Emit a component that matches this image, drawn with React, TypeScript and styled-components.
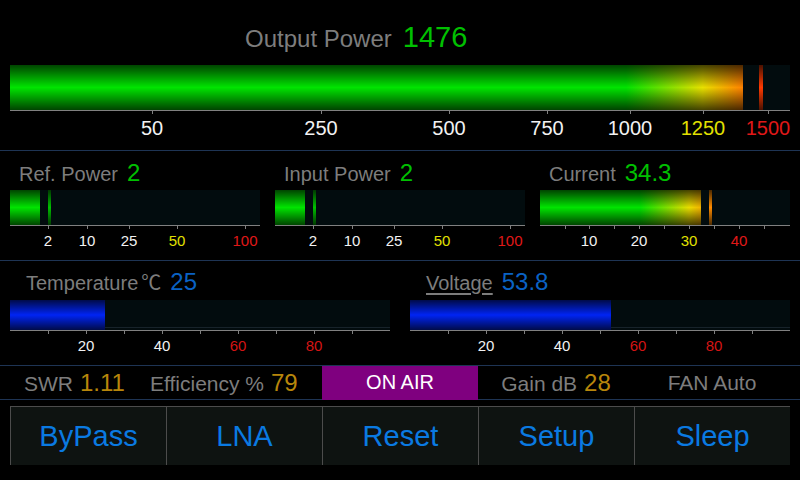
import React from 'react';
import styled, { createGlobalStyle } from 'styled-components';

const GlobalStyle = createGlobalStyle`
  html, body {
    margin: 0;
    padding: 0;
    background: #000;
  }
  body {
    font-family: "Liberation Sans", Arial, "DejaVu Sans", sans-serif;
  }
`;

const SHADE =
  'linear-gradient(to bottom, rgba(0,0,0,0.7) 0%, rgba(0,0,0,0) 50%, rgba(0,0,0,0.7) 100%)';

const GREY = '#7d7d7d';
const GREEN = '#00c000';
const BLUE = '#0a62c4';
const GOLD = '#b8860b';
const WHITE = '#f2f2f2';
const YELLOW = '#e2e000';
const RED = '#e01818';

type Tick = { at: number; label?: string; color?: string };

const Screen = styled.div`
  width: 800px;
  height: 480px;
  background: #000;
  overflow: hidden;
  display: flex;
  flex-direction: column;
`;

const Section = styled.section<{ $top: number }>`
  box-sizing: border-box;
  padding: ${(p) => p.$top}px 10px 0;
  border-bottom: 1px solid #1e3454;
`;

const TitleRow = styled.div`
  display: flex;
  align-items: baseline;
  gap: 11px;
  height: 30px;
  padding-left: 235px;
`;

const TitleLabel = styled.span`
  font-size: 24px;
  line-height: 30px;
  color: ${GREY};
`;

const TitleValue = styled.span`
  font-size: 29px;
  line-height: 30px;
  color: ${GREEN};
`;

const Row = styled.div<{ $gap: number }>`
  display: flex;
  gap: ${(p) => p.$gap}px;
`;

const Block = styled.div<{ $w: number }>`
  flex: 0 0 ${(p) => p.$w}px;
  display: flex;
  flex-direction: column;
`;

const LabelRow = styled.div<{ $indent: number; $after: number }>`
  display: flex;
  align-items: baseline;
  gap: 9px;
  height: 26px;
  padding-left: ${(p) => p.$indent}px;
  margin-bottom: ${(p) => p.$after}px;
`;

const Label = styled.span<{ $underline?: boolean }>`
  font-size: 20px;
  line-height: 26px;
  color: ${GREY};
  text-decoration: ${(p) => (p.$underline ? 'underline' : 'none')};
  text-underline-offset: 3px;
`;

const Unit = styled.span`
  font-family: "Noto Sans CJK SC", "DejaVu Sans", sans-serif;
  margin-left: 3px;
`;

const Value = styled.span<{ $color: string }>`
  font-size: 24px;
  line-height: 26px;
  color: ${(p) => p.$color};
`;

const Track = styled.div<{ $h: number; $lined?: boolean }>`
  position: relative;
  height: ${(p) => p.$h}px;
  display: flex;
  background: ${(p) =>
    p.$lined
      ? 'linear-gradient(to top, #020c0e 2px, #17232a 2px, #17232a 3px, #020c0e 3px)'
      : '#020c0e'};
`;

const Fill = styled.div<{ $grad: string }>`
  height: 100%;
  background-image: ${SHADE}, ${(p) => p.$grad};
  background-repeat: no-repeat;
`;

const Peak = styled.div<{ $color: string; $w: number }>`
  position: absolute;
  top: 0;
  bottom: 0;
  width: ${(p) => p.$w}px;
  background-image: ${SHADE}, linear-gradient(${(p) => p.$color}, ${(p) => p.$color});
`;

const Scale = styled.div<{ $h: number }>`
  position: relative;
  height: ${(p) => p.$h}px;
  border-top: 1px solid #808080;
`;

const TickMark = styled.div`
  position: absolute;
  top: 0;
  width: 1px;
  height: 3px;
  background: #808080;
`;

const TickLabel = styled.span<{ $color: string; $size: number; $top: number }>`
  position: absolute;
  top: ${(p) => p.$top}px;
  transform: translateX(-50%);
  font-size: ${(p) => p.$size}px;
  line-height: ${(p) => p.$size}px;
  color: ${(p) => p.$color};
  white-space: nowrap;
`;

const StatusBar = styled.div`
  display: grid;
  grid-template-columns: 140px 172px 156px 156px 156px;
  height: 33px;
`;

const StatusCell = styled.div<{ $align: 'start' | 'center'; $indent?: number }>`
  display: flex;
  align-items: baseline;
  justify-content: ${(p) => (p.$align === 'center' ? 'center' : 'flex-start')};
  padding-left: ${(p) => p.$indent ?? 0}px;
  gap: 7px;
  line-height: 33px;
`;

const StatusLabel = styled.span`
  font-size: 21px;
  color: ${GREY};
`;

const StatusValue = styled.span`
  font-size: 24px;
  color: ${GOLD};
`;

const OnAir = styled.div`
  background: #7f007f;
  color: #fff;
  font-size: 20px;
  line-height: 33px;
  text-align: center;
`;

const ButtonBar = styled.div`
  display: grid;
  grid-template-columns: repeat(5, 156px);
  padding: 6px 10px 0;
`;

const Button = styled.button`
  height: 59px;
  margin: 0;
  padding: 0;
  background: #0e1311;
  border: none;
  border-top: 1px solid #4c4c4c;
  border-left: 1px solid #4c4c4c;
  color: #0a7ae2;
  font-family: inherit;
  font-size: 29px;
  cursor: pointer;
`;

type MeterProps = {
  height: number;
  fill: number;
  grad: string;
  peak?: number;
  peakColor?: string;
  peakWidth?: number;
  ticks: Tick[];
  scaleHeight: number;
  labelSize: number;
  labelTop: number;
  lined?: boolean;
};

function Meter({
  height,
  fill,
  grad,
  peak,
  peakColor = GREEN,
  peakWidth = 3,
  ticks,
  scaleHeight,
  labelSize,
  labelTop,
  lined,
}: MeterProps) {
  return (
    <div>
      <Track $h={height} $lined={lined}>
        <Fill
          $grad={grad}
          style={{ width: `${fill * 100}%`, backgroundSize: `${100 / fill}% 100%` }}
        />
        {peak !== undefined && (
          <Peak $color={peakColor} $w={peakWidth} style={{ left: `${peak * 100}%` }} />
        )}
      </Track>
      <Scale $h={scaleHeight}>
        {ticks.map((t, i) => (
          <React.Fragment key={i}>
            <TickMark style={{ left: `${t.at * 100}%` }} />
            {t.label && (
              <TickLabel
                $color={t.color ?? WHITE}
                $size={labelSize}
                $top={labelTop}
                style={{ left: `${t.at * 100}%` }}
              >
                {t.label}
              </TickLabel>
            )}
          </React.Fragment>
        ))}
      </Scale>
    </div>
  );
}

const powerTicks: Tick[] = [
  { at: 142 / 780, label: '50' },
  { at: 311 / 780, label: '250' },
  { at: 439 / 780, label: '500' },
  { at: 537 / 780, label: '750' },
  { at: 620 / 780, label: '1000' },
  { at: 693 / 780, label: '1250', color: YELLOW },
  { at: 758 / 780, label: '1500', color: RED },
];

const smallTicks: Tick[] = [
  { at: 38 / 250, label: '2' },
  { at: 77 / 250, label: '10' },
  { at: 119 / 250, label: '25' },
  { at: 167 / 250, label: '50', color: YELLOW },
  { at: 235 / 250, label: '100', color: RED },
];

const currentTicks: Tick[] = [
  { at: 25 / 250 },
  { at: 49 / 250, label: '10' },
  { at: 74 / 250 },
  { at: 99 / 250, label: '20' },
  { at: 124 / 250 },
  { at: 149 / 250, label: '30', color: YELLOW },
  { at: 174 / 250 },
  { at: 199 / 250, label: '40', color: RED },
  { at: 224 / 250 },
];

const linearTicks: Tick[] = [
  { at: 0.1 },
  { at: 0.2, label: '20' },
  { at: 0.3 },
  { at: 0.4, label: '40' },
  { at: 0.5 },
  { at: 0.6, label: '60', color: '#d41414' },
  { at: 0.7 },
  { at: 0.8, label: '80', color: '#d41414' },
  { at: 0.9 },
];

const mainGrad =
  'linear-gradient(to right, #00e400 0%, #00e400 79%, #e8e000 88.8%, #ff8000 94%, #ff2800 97%)';
const smallGrad =
  'linear-gradient(to right, #00e400 0%, #00e400 47.6%, #e8e000 66.8%, #ff2800 94%)';
const currentGrad =
  'linear-gradient(to right, #00e400 0%, #00e400 40%, #e8dc00 59.6%, #ff8000 70%, #ff2800 80%)';
const blueGrad = 'linear-gradient(to right, #0024f4, #0024f4)';

const buttons = ['ByPass', 'LNA', 'Reset', 'Setup', 'Sleep'];

export default function App() {
  return (
    <>
      <GlobalStyle />
      <Screen>
        <Section $top={22}>
          <TitleRow>
            <TitleLabel>Output Power</TitleLabel>
            <TitleValue>1476</TitleValue>
          </TitleRow>
          <div style={{ height: 13 }} />
          <Meter
            height={45}
            fill={733 / 780}
            grad={mainGrad}
            peak={749 / 780}
            peakColor="#ff3a00"
            peakWidth={4}
            ticks={powerTicks}
            scaleHeight={39}
            labelSize={20}
            labelTop={7}
          />
        </Section>

        <Section $top={9}>
          <Row $gap={15}>
            <Block $w={250}>
              <LabelRow $indent={9} $after={4}>
                <Label>Ref. Power</Label>
                <Value $color={GREEN}>2</Value>
              </LabelRow>
              <Meter
                height={35}
                fill={30 / 250}
                grad={smallGrad}
                peak={38 / 250}
                ticks={smallTicks}
                scaleHeight={34}
                labelSize={15}
                labelTop={7}
              />
            </Block>
            <Block $w={250}>
              <LabelRow $indent={9} $after={4}>
                <Label>Input Power</Label>
                <Value $color={GREEN}>2</Value>
              </LabelRow>
              <Meter
                height={35}
                fill={30 / 250}
                grad={smallGrad}
                peak={38 / 250}
                ticks={smallTicks}
                scaleHeight={34}
                labelSize={15}
                labelTop={7}
              />
            </Block>
            <Block $w={250}>
              <LabelRow $indent={9} $after={4}>
                <Label>Current</Label>
                <Value $color={GREEN}>34.3</Value>
              </LabelRow>
              <Meter
                height={35}
                fill={161 / 250}
                grad={currentGrad}
                peak={169 / 250}
                peakColor="#ff8c00"
                ticks={currentTicks}
                scaleHeight={34}
                labelSize={15}
                labelTop={7}
              />
            </Block>
          </Row>
        </Section>

        <Section $top={8}>
          <Row $gap={20}>
            <Block $w={380}>
              <LabelRow $indent={16} $after={5}>
                <Label>
                  Temperature<Unit>℃</Unit>
                </Label>
                <Value $color={BLUE}>25</Value>
              </LabelRow>
              <Meter
                height={30}
                fill={95 / 380}
                grad={blueGrad}
                ticks={linearTicks}
                scaleHeight={34}
                labelSize={15}
                labelTop={7}
                lined
              />
            </Block>
            <Block $w={380}>
              <LabelRow $indent={16} $after={5}>
                <Label $underline>Voltage</Label>
                <Value $color={BLUE}>53.8</Value>
              </LabelRow>
              <Meter
                height={30}
                fill={201 / 380}
                grad={blueGrad}
                ticks={linearTicks}
                scaleHeight={34}
                labelSize={15}
                labelTop={7}
                lined
              />
            </Block>
          </Row>
        </Section>

        <Section $top={0}>
          <StatusBar>
            <StatusCell $align="start" $indent={14}>
              <StatusLabel>SWR</StatusLabel>
              <StatusValue>1.11</StatusValue>
            </StatusCell>
            <StatusCell $align="start">
              <StatusLabel>Efficiency %</StatusLabel>
              <StatusValue>79</StatusValue>
            </StatusCell>
            <OnAir>ON AIR</OnAir>
            <StatusCell $align="center">
              <StatusLabel>Gain dB</StatusLabel>
              <StatusValue>28</StatusValue>
            </StatusCell>
            <StatusCell $align="center">
              <StatusLabel>FAN Auto</StatusLabel>
            </StatusCell>
          </StatusBar>
        </Section>

        <ButtonBar>
          {buttons.map((b) => (
            <Button key={b}>{b}</Button>
          ))}
        </ButtonBar>
      </Screen>
    </>
  );
}
